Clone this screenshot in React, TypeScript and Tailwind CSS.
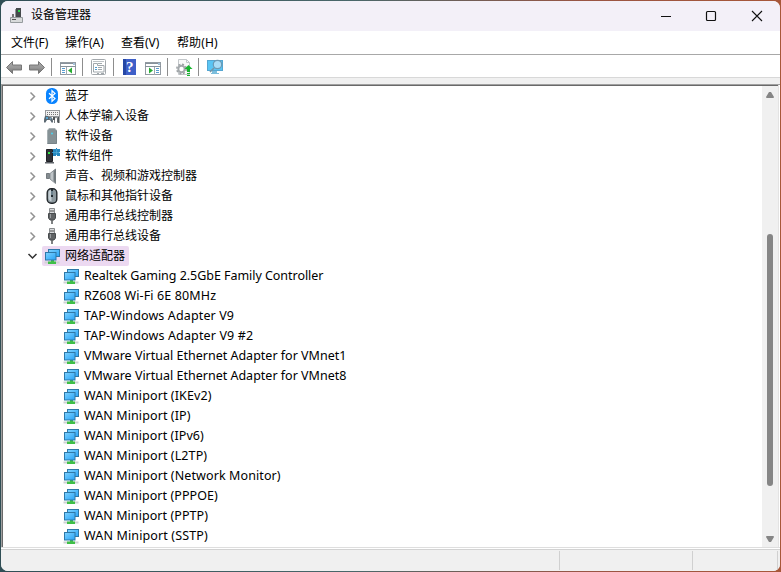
import React from "react";

const ui = "font-['Noto_Sans','Noto_Sans_CJK_SC',sans-serif]";

function NetworkIcon() {
  return (
    <svg width="16" height="16" viewBox="0 0 16 16" className="shrink-0">
      <defs>
        <linearGradient id="screen" x1="0" y1="0" x2="1" y2="1">
          <stop offset="0" stopColor="#7fd2ff" />
          <stop offset="1" stopColor="#27a3f7" />
        </linearGradient>
      </defs>
      <rect x="4.5" y="1.5" width="11" height="7" fill="url(#screen)" stroke="#2e78a8" />
      <rect x="0.5" y="13.5" width="15" height="2" fill="#cfd2d4" />
      <path d="M7 12h3v1.500h2V16H4v-2.500h3z" fill="#3fbf48" />
      <rect x="1.500" y="4.500" width="10.500" height="7.500" fill="url(#screen)" stroke="#2e78a8" />
    </svg>
  );
}

function BluetoothIcon() {
  return (
    <svg width="16" height="16" viewBox="0 0 16 16" className="shrink-0">
      <rect x="2" y="0" width="12" height="16" rx="5.500" fill="#0a84ff" />
      <path d="M5 5.200l6 5.400-3 2.700V2.700l3 2.700-6 5.400" fill="none" stroke="#fff" strokeWidth="1.200" />
    </svg>
  );
}

function HidIcon() {
  return (
    <svg width="16" height="16" viewBox="0 0 16 16" className="shrink-0">
      <rect x="1.500" y="2.500" width="14" height="6" fill="#f1f1f1" stroke="#96999c" />
      <path d="M3 4.500h11M3 6.500h11" stroke="#777" strokeDasharray="1 1" />
      <path d="M1 8q3-1 4 1h2q2 1 2 5l-1 1-2-3H3l-2 3-1-1q0-4 1-6z" fill="#596670" />
      <circle cx="3" cy="10" r="1" fill="#55b8ec" />
      <circle cx="6.500" cy="10.500" r="1" fill="#7fa6bd" />
      <path d="M10.500 15v-4q0-2 1.500-2t1.500 2v3" fill="none" stroke="#777d80" />
      <path d="M10 9v3M14.500 9v6" stroke="#4f5558" strokeWidth="2" />
    </svg>
  );
}

function SoftwareDeviceIcon() {
  return (
    <svg width="16" height="16" viewBox="0 0 16 16" className="shrink-0">
      <path d="M3.500 2.500l1.500-2h6l1.500 2v13h-9z" fill="#869296" stroke="#a6afb2" />
      <path d="M12.500 2.500v13h-9" fill="none" stroke="#778388" />
      <circle cx="8" cy="5.500" r="1" fill="#49d6f2" />
    </svg>
  );
}

function ComponentIcon() {
  return (
    <svg width="16" height="16" viewBox="0 0 16 16" className="shrink-0">
      <path d="M2.500 1.500h6v12h-6z" fill="#303238" stroke="#202126" />
      <path d="M1 15.500V14h9v1.500" fill="#60656a" />
      <rect x="4" y="4" width="2" height="2" fill="#35e747" />
      <path d="M9 1h3V0h1v1h3v3h-1v1h1v3h-3V7h-1v1H9V5H8V4h1z" fill="#2587c0" />
      <path d="M12.500 1v6M9 4.500h7" stroke="#65b9df" strokeWidth="0.500" />
    </svg>
  );
}

function SpeakerIcon() {
  return (
    <svg width="16" height="16" viewBox="0 0 16 16" className="shrink-0">
      <path d="M2.500 5.500h3v5h-3z" fill="#858c90" stroke="#737a7e" />
      <path d="M6 5.500L11.500 1v14.500L6 11z" fill="#bfc5c8" stroke="#8b9296" />
      <path d="M9.500 3L12 1v14.500L9.500 13z" fill="#71797d" />
    </svg>
  );
}

function MouseIcon() {
  return (
    <svg width="16" height="16" viewBox="0 0 16 16" className="shrink-0">
      <rect x="3.200" y="0.700" width="9.600" height="14.600" rx="4" fill="#8d999f" stroke="#22272b" strokeWidth="1.400" />
      <path d="M4.500 5q0-3 3-3.500v12q-3-1-3-4z" fill="#c4ced3" />
      <path d="M8 1v8" stroke="#222b31" strokeWidth="2" />
      <path d="M8 3v4" stroke="#b5d8e9" />
    </svg>
  );
}

function UsbIcon() {
  return (
    <svg width="16" height="16" viewBox="0 0 16 16" className="shrink-0">
      <path d="M5.500.5h5v5h-5z" fill="#d8dadc" stroke="#898c8e" />
      <path d="M7 2v2M9 2v2" stroke="#555" />
      <path d="M4.500 5.500h7V10L10 12H6l-1.500-2z" fill="#606365" stroke="#484c4e" />
      <path d="M6.500 6v4" stroke="#999da0" />
      <path d="M8 12v4" stroke="#55585a" strokeWidth="1.500" />
    </svg>
  );
}

function Chevron({ open = false }: { open?: boolean }) {
  return (
    <svg width="10" height="10" viewBox="0 0 10 10" className="shrink-0">
      <path
        d={open ? "M1.500 3l4 4 4-4" : "M3.500 1.500l4 4-4 4"}
        fill="none"
        stroke={open ? "#333" : "#929292"}
        strokeWidth="1.500"
      />
    </svg>
  );
}

const categories = [
  { icon: <BluetoothIcon />, label: "蓝牙" },
  { icon: <HidIcon />, label: "人体学输入设备" },
  { icon: <SoftwareDeviceIcon />, label: "软件设备" },
  { icon: <ComponentIcon />, label: "软件组件" },
  { icon: <SpeakerIcon />, label: "声音、视频和游戏控制器" },
  { icon: <MouseIcon />, label: "鼠标和其他指针设备" },
  { icon: <UsbIcon />, label: "通用串行总线控制器" },
  { icon: <UsbIcon />, label: "通用串行总线设备" },
];

const adapters = [
  { name: "Realtek Gaming 2.5GbE Family Controller", tracking: "tracking-[-0.04px]" },
  { name: "RZ608 Wi-Fi 6E 80MHz", tracking: "tracking-[0.13px]" },
  { name: "TAP-Windows Adapter V9", tracking: "tracking-[0.13px]" },
  { name: "TAP-Windows Adapter V9 #2", tracking: "tracking-[0.14px]" },
  { name: "VMware Virtual Ethernet Adapter for VMnet1", tracking: "tracking-[0px]" },
  { name: "VMware Virtual Ethernet Adapter for VMnet8", tracking: "tracking-[0px]" },
  { name: "WAN Miniport (IKEv2)", tracking: "tracking-[0.1px]" },
  { name: "WAN Miniport (IP)", tracking: "tracking-[0.1px]" },
  { name: "WAN Miniport (IPv6)", tracking: "tracking-[0.08px]" },
  { name: "WAN Miniport (L2TP)", tracking: "tracking-[0.1px]" },
  { name: "WAN Miniport (Network Monitor)", tracking: "tracking-[0.1px]" },
  { name: "WAN Miniport (PPPOE)", tracking: "tracking-[0.07px]" },
  { name: "WAN Miniport (PPTP)", tracking: "tracking-[0.07px]" },
  { name: "WAN Miniport (SSTP)", tracking: "tracking-[0.14px]" },
];

function TitleBar() {
  return (
    <header className="flex h-[30px] shrink-0 items-center bg-[#f3f0f8] pl-2">
      <svg width="16" height="18" viewBox="0 0 16 18" className="shrink-0">
        <path d="M7 1h5v10H7z" fill="#45494c" />
        <path d="M6 2h1v9H6z" fill="#92979a" />
        <rect x="9" y="3" width="2" height="2" fill="#28dc4a" />
        <path d="M3 7h2v3H3z" fill="#777" />
        <path d="M1.500 10.500h12v5h-12z" fill="#d8dadb" stroke="#969b9e" />
        <rect x="3" y="12" width="4" height="1" fill="#555" />
      </svg>
      <h1 className="ml-[6px] mt-[-2px] text-xs leading-5">设备管理器</h1>
      <div className="ml-auto flex">
        <svg width="46" height="28" viewBox="0 0 46 28"><path d="M19 14.500h10" stroke="#111" /></svg>
        <svg width="46" height="28" viewBox="0 0 46 28"><rect x="18.500" y="9.500" width="9" height="9" rx="1" fill="none" stroke="#111" strokeWidth="1.200" /></svg>
        <svg width="46" height="28" viewBox="0 0 46 28"><path d="M18 9l10 10M28 9L18 19" stroke="#111" strokeWidth="1.100" /></svg>
      </div>
    </header>
  );
}

function Toolbar() {
  return (
    <div className="h-[22px] shrink-0 bg-white">
      <svg width="240" height="22" viewBox="1 55 240 22">
        <defs>
          <linearGradient id="arrow" x1="0" y1="0" x2="0" y2="1">
            <stop offset="0" stopColor="#aaa" />
            <stop offset="0.500" stopColor="#999" />
            <stop offset="1" stopColor="#707070" />
          </linearGradient>
        </defs>
        <path d="M6.500 67.500l6-6v3.500h9v5h-9v3.500z" fill="url(#arrow)" stroke="#777" />
        <path d="M44.500 67.500l-6-6v3.500h-9v5h9v3.500z" fill="url(#arrow)" stroke="#777" />
        <path d="M51.500 58v18M82.500 58v18M113.500 58v18M167.500 58v18M198.500 58v18" stroke="#8d8d8d" />

        <rect x="60.500" y="62.500" width="15" height="12" fill="#fff" stroke="#939ba2" />
        <path d="M60 63.500h13M60 66.500h16" stroke="#87919a" />
        <path d="M73 64h2" stroke="#4e87b4" />
        <path d="M66.500 67v8" stroke="#a0a8ae" />
        <path d="M62 68.500h3M62 70.500h3M62 72.500h3" stroke="#579bd0" />
        <path d="M72 67.500v6l-4-3z" fill="#27ac32" />

        <rect x="91.500" y="59.500" width="14" height="15" rx="1" fill="#fff" stroke="#a3a8ac" />
        <path d="M93 61.500h11" stroke="#bec3c6" />
        <path d="M93.500 63.500h4v2h6.500v6.500h-10.500z" fill="#fff" stroke="#a1a8ac" />
        <path d="M98 63.500h4M98 67.500h4M98 69.500h4M97 73.500h2M101 73.500h3" stroke="#a1a8ac" />
        <path d="M95 67.500h2M95 69.500h2" stroke="#4e9bd0" />

        <rect x="123" y="59" width="13" height="16" fill="#3e5fc8" />
        <rect x="123" y="59" width="3" height="16" fill="#2547a5" />
        <text x="126" y="72" fill="#fff" fontFamily="Liberation Serif, serif" fontSize="15" fontWeight="bold">?</text>

        <rect x="145.500" y="62.500" width="15" height="12" fill="#fff" stroke="#939ba2" />
        <path d="M145 63.500h13M145 66.500h16" stroke="#87919a" />
        <path d="M158 64h2" stroke="#4e87b4" />
        <path d="M154.500 67v8" stroke="#a0a8ae" />
        <path d="M156 68.500h3M156 70.500h3M156 72.500h3" stroke="#579bd0" />
        <path d="M149 67.500v6l4-3z" fill="#27ac32" />

        <path d="M178.500 59.500h8l3 3v12h-11z" fill="#f9f9f9" stroke="#c3c7ca" />
        <path d="M186.500 59.500v3h3" fill="none" stroke="#c3c7ca" />
        <circle cx="181.500" cy="69" r="4.700" fill="none" stroke="#9ca1a4" strokeWidth="1.500" strokeDasharray="2 1.690" />
        <circle cx="181.500" cy="69" r="3.200" fill="#fff" stroke="#a3a8ab" strokeWidth="2" />
        <path d="M188.500 65l4 4h-2.500v3h-3v-3h-2.500zM187 73h3v1h-3zM187 75h3v1h-3z" fill="#18b52f" />

        <rect x="207.500" y="60.500" width="15" height="10" fill="#59c5f4" stroke="#55a6d1" />
        <path d="M212 71h5v2h2v1h-8v-1h1z" fill="#7cbedc" />
        <path d="M214 68l-4 4" stroke="#7795a5" strokeWidth="1.600" />
        <circle cx="217.500" cy="64.500" r="4.200" fill="#a9ddf7" stroke="#6a9ab5" strokeWidth="1.200" />
      </svg>
    </div>
  );
}

function DeviceTree() {
  return (
    <ul className="min-w-0 flex-1">
      {categories.map((item) => (
        <li key={item.label} className="flex h-5 items-center pl-6">
          <Chevron />
          <span className="ml-[7px] flex">{item.icon}</span>
          <span className="ml-[5px] text-xs leading-5">{item.label}</span>
        </li>
      ))}
      <li className="flex h-5 items-center pl-6">
        <Chevron open />
        <div className="ml-[5px] flex h-5 w-[87px] items-center rounded-[2px] bg-[#ecd9f1] pl-[2px]">
          <NetworkIcon />
          <span className="ml-[5px] text-xs leading-5">网络适配器</span>
        </div>
      </li>
      {adapters.map(({ name, tracking }) => (
        <li key={name} className="flex h-5 items-center pl-[60px]">
          <NetworkIcon />
          <span className={`ml-[5px] whitespace-nowrap text-[12.5px] leading-5 ${tracking}`}>{name}</span>
        </li>
      ))}
    </ul>
  );
}

function ScrollBar() {
  return (
    <div className="flex w-4 shrink-0 flex-col items-center bg-[#f0f0f0]">
      <svg width="10" height="14" viewBox="0 0 10 14"><path d="M1 11l3-5h2l3 5q0 1-1 1H2q-1 0-1-1z" fill="#858585" /></svg>
      <div className="mt-[134px] h-[252px] w-1.5 rounded-full bg-[#858585]" />
      <svg width="10" height="14" viewBox="0 0 10 14" className="mb-px mt-auto"><path d="M1 5l3 5h2l3-5q0-1-1-1H2q-1 0-1 1z" fill="#858585" /></svg>
    </div>
  );
}

export default function App() {
  return (
    <div className={`h-[572px] w-[781px] bg-[linear-gradient(90deg,#304e55_0%,#49676a_45%,#9a5543_75%,#a75739_100%)] p-px text-black ${ui}`}>
      <main className="flex h-[570px] w-[779px] flex-col overflow-hidden rounded-[7px] bg-white">
        <TitleBar />
        <nav className="flex h-[23px] shrink-0 items-center gap-4 pl-[10px] pt-px text-xs leading-5">
          <span className="w-[38px]">文件(F)</span>
          <span className="w-10">操作(A)</span>
          <span className="w-10">查看(V)</span>
          <span className="tracking-[0.1px]">帮助(H)</span>
        </nav>
        <div className="h-px shrink-0 bg-[#a8a8a8]" />
        <Toolbar />
        <div className="h-[7px] shrink-0 border-t border-[#d8d8d8] bg-[#f0f0f0]" />
        <section className="flex h-[463px] shrink-0 border-l border-t border-[#a0a0a0]">
          <div className="flex min-w-0 flex-1 border-l border-t border-[#696969]">
            <DeviceTree />
            <ScrollBar />
          </div>
          <div className="w-px bg-[#e3e3e3]" />
          <div className="w-px bg-white" />
        </section>
        <div className="h-px shrink-0 bg-[#dedede]" />
        <div className="h-px shrink-0 bg-white" />
        <footer className="flex h-[22px] shrink-0 border-t border-[#d2d2d2] bg-[#f0f0f0]">
          <div className="my-px w-[559px] border-r border-[#d0d0d0]" />
          <div className="my-px w-[133px] border-r border-[#d0d0d0]" />
          <div className="my-px w-[85px] border-r border-[#d0d0d0]" />
        </footer>
      </main>
    </div>
  );
}
